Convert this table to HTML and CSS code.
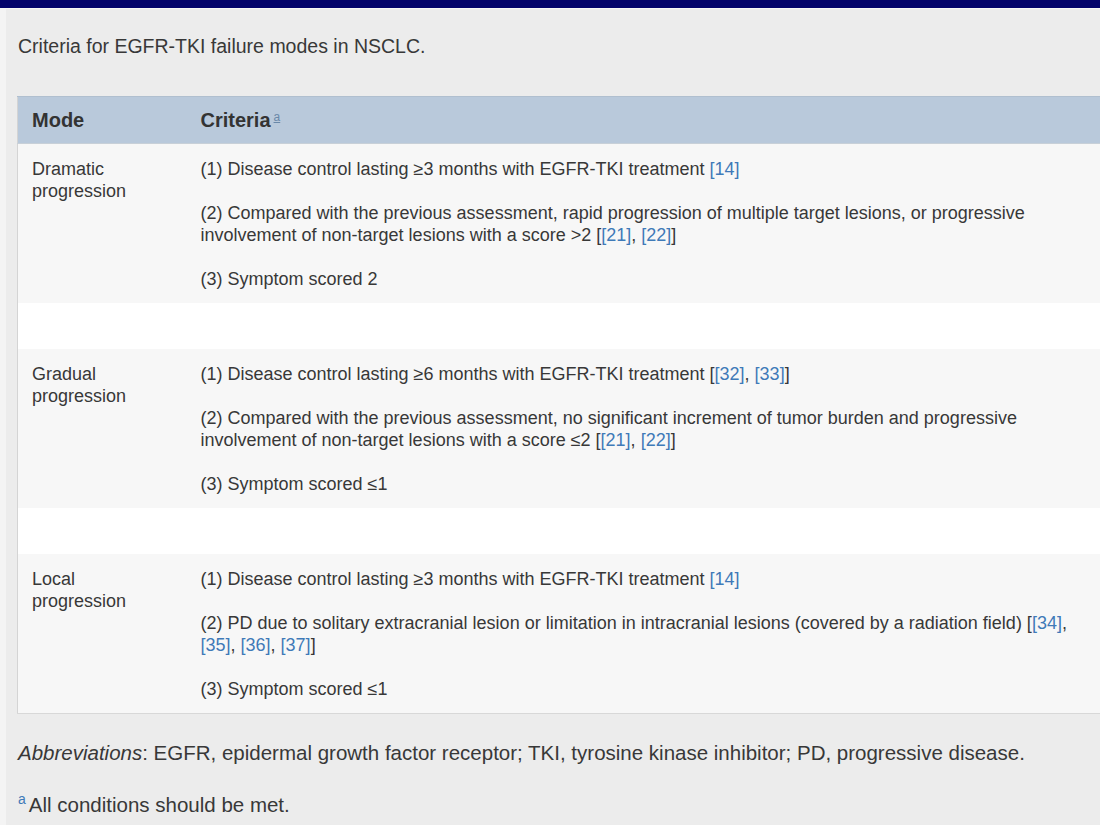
FILE: index.html
```html
<!DOCTYPE html>
<html lang="en">
<head>
<meta charset="utf-8">
<title>Criteria for EGFR-TKI failure modes in NSCLC</title>
<link rel="stylesheet" href="styles.css">
</head>
<body>
<div class="topbar"></div>
<div class="page">
  <div class="panel">
    <p class="caption">Criteria for EGFR-TKI failure modes in NSCLC.</p>
    <table class="tbl">
      <colgroup>
        <col class="col1">
        <col class="col2">
      </colgroup>
      <thead>
        <tr>
          <th class="c1">Mode</th>
          <th class="c2">Criteria<sup class="fn-head">a</sup></th>
        </tr>
      </thead>
      <tbody>
        <tr class="row">
          <td class="c1">Dramatic progression</td>
          <td class="c2">
            <p>(1) Disease control lasting ≥3 months with EGFR-TKI treatment <a class="ref">[14]</a></p>
            <p>(2) Compared with the previous assessment, rapid progression of multiple target lesions, or progressive involvement of non-target lesions with a score &gt;2 [<a class="ref">[21]</a>, <a class="ref">[22]</a>]</p>
            <p>(3) Symptom scored 2</p>
          </td>
        </tr>
        <tr class="spacer"><td colspan="2"></td></tr>
        <tr class="row">
          <td class="c1">Gradual progression</td>
          <td class="c2">
            <p>(1) Disease control lasting ≥6 months with EGFR-TKI treatment [<a class="ref">[32]</a>, <a class="ref">[33]</a>]</p>
            <p>(2) Compared with the previous assessment, no significant increment of tumor burden and progressive involvement of non-target lesions with a score ≤2 [<a class="ref">[21]</a>, <a class="ref">[22]</a>]</p>
            <p>(3) Symptom scored ≤1</p>
          </td>
        </tr>
        <tr class="spacer"><td colspan="2"></td></tr>
        <tr class="row last">
          <td class="c1">Local progression</td>
          <td class="c2">
            <p>(1) Disease control lasting ≥3 months with EGFR-TKI treatment <a class="ref">[14]</a></p>
            <p>(2) PD due to solitary extracranial lesion or limitation in intracranial lesions (covered by a radiation field) [<a class="ref">[34]</a>, <a class="ref">[35]</a>, <a class="ref">[36]</a>, <a class="ref">[37]</a>]</p>
            <p>(3) Symptom scored ≤1</p>
          </td>
        </tr>
      </tbody>
    </table>
    <p class="note"><em>Abbreviations</em>: EGFR, epidermal growth factor receptor; TKI, tyrosine kinase inhibitor; PD, progressive disease.</p>
    <p class="footnote"><sup class="fn-mark">a</sup>All conditions should be met.</p>
  </div>
</div>
</body>
</html>
```
FILE: styles.css
```css
html, body {
  margin: 0;
  padding: 0;
  overflow: hidden;
  background: #ededed;
}

body {
  font-family: "Liberation Sans", Arial, sans-serif;
  color: #383838;
  width: 1100px;
  height: 825px;
}

.topbar {
  height: 8px;
  background: #03036b;
  border-bottom: 1px solid #f6f6f6;
}

.page {
  background: #f4f4f4;
  padding-left: 6px;
  height: 816px;
}

.panel {
  background: #ececec;
  height: 100%;
  padding-left: 11px;
  padding-top: 25px;
  box-sizing: border-box;
}

.caption {
  margin: 0 0 38px 1px;
  font-size: 19.5px;
  line-height: 24px;
}

.tbl {
  border-collapse: collapse;
  table-layout: fixed;
  width: 1087px;
  font-size: 18px;
  line-height: 22px;
  border-left: 1px solid #d4d4d4;
}

.col1 {
  width: 169px;
}

.tbl th {
  background: #b9c9db;
  border-top: 1px solid #b0bfcf;
  border-bottom: 1px solid #c8d0d8;
  text-align: left;
  font-size: 20px;
  font-weight: bold;
  height: 46px;
  padding: 0 14px;
  color: #333333;
  vertical-align: middle;
}

.fn-head {
  font-size: 12px;
  font-weight: normal;
  color: #6a88a8;
  text-decoration: underline;
  vertical-align: 6px;
  line-height: 0;
  margin-left: 3px;
}

.row td {
  background: #f7f7f7;
  padding: 14px 14px 13px 14px;
  vertical-align: top;
}

.row.last td {
  border-bottom: 1px solid #d8d8d8;
}

.row p {
  margin: 0 0 22px 0;
}

.row p:last-child {
  margin-bottom: 0;
}

.spacer td {
  background: #ffffff;
  height: 46px;
  padding: 0;
}

.ref {
  color: #3f7ab8;
  text-decoration: none;
}

.note {
  margin: 27px 0 0 1px;
  font-size: 20.5px;
  line-height: 24px;
}

.footnote {
  margin: 28px 0 0 1px;
  font-size: 20.5px;
  line-height: 24px;
}

.fn-mark {
  font-size: 14px;
  color: #3f7ab8;
  vertical-align: 8px;
  line-height: 0;
  margin-right: 3px;
}
```
